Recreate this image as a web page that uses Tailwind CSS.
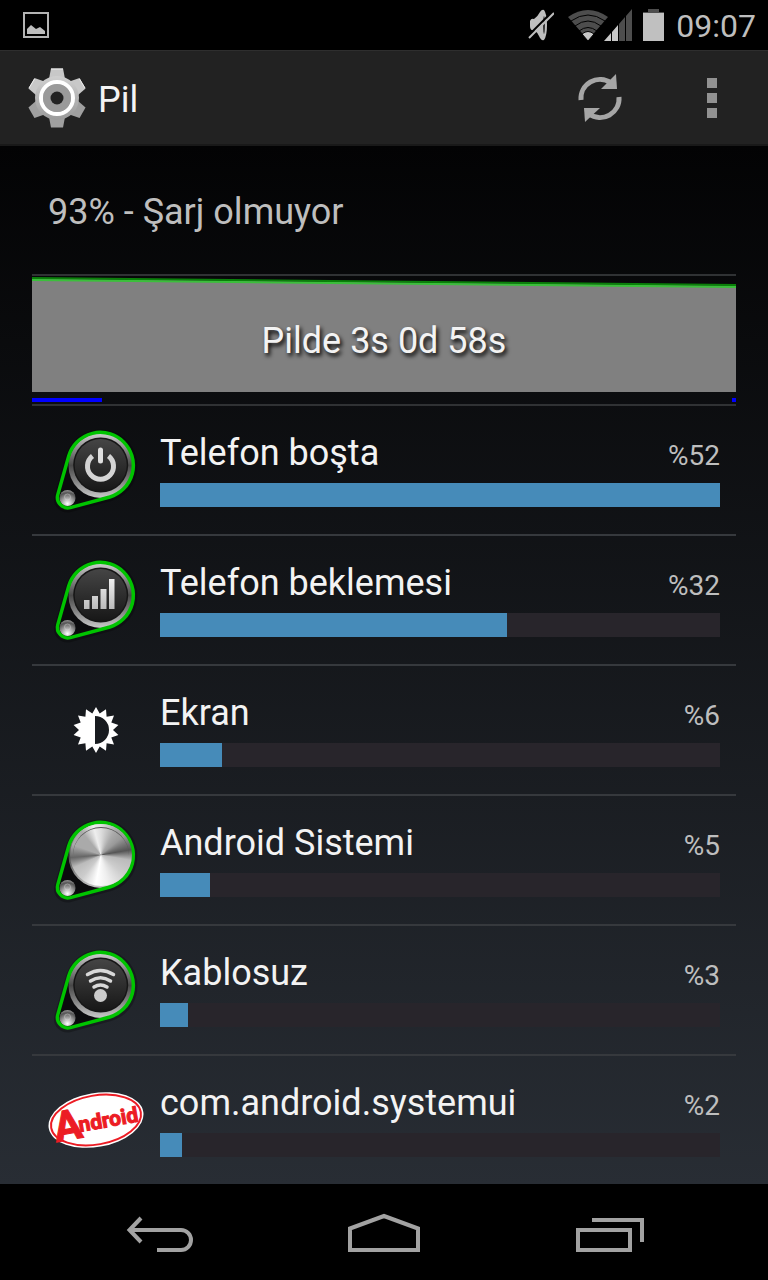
<!DOCTYPE html>
<html lang="tr">
<head>
    <meta charset="UTF-8">
    <meta name="viewport" content="width=device-width, initial-scale=1.0">
    <title>Pil</title>
    <script src="https://cdn.jsdelivr.net/npm/@tailwindcss/browser@4"></script>
</head>
<body class="flex flex-col min-h-screen bg-black font-['Roboto',sans-serif] text-[#f3f3f3]">

    <!-- Shared knob artwork -->
    <svg class="absolute w-0 h-0" aria-hidden="true">
        <defs>
            <linearGradient id="rim" x1="0" y1="0" x2="0" y2="1">
                <stop offset="0" stop-color="#d0d0d0"/>
                <stop offset=".25" stop-color="#8a8a8a"/>
                <stop offset=".5" stop-color="#484848"/>
                <stop offset=".75" stop-color="#858585"/>
                <stop offset="1" stop-color="#cacaca"/>
            </linearGradient>
            <linearGradient id="face" x1="0" y1="0" x2="0" y2="1">
                <stop offset="0" stop-color="#454545"/>
                <stop offset="1" stop-color="#171717"/>
            </linearGradient>
            <linearGradient id="glyph" x1="0" y1="0" x2="0" y2="1">
                <stop offset="0" stop-color="#efefef"/>
                <stop offset="1" stop-color="#bbb"/>
            </linearGradient>
            <radialGradient id="ball" cx=".5" cy=".85" r=".9">
                <stop offset="0" stop-color="#fff"/>
                <stop offset=".45" stop-color="#9a9a9a"/>
                <stop offset=".75" stop-color="#555"/>
                <stop offset="1" stop-color="#aaa"/>
            </radialGradient>
            <linearGradient id="gear" x1="0" y1="0" x2="0" y2="1">
                <stop offset="0" stop-color="#d0d0d0"/>
                <stop offset="1" stop-color="#9a9a9a"/>
            </linearGradient>
        </defs>
        <symbol id="knob" viewBox="0 0 96 96">
            <path d="M20.8 34.7A33.5 33.5 0 1 1 61.8 76.3L22.3 87.1A10.5 10.5 0 0 1 9.4 74.1Z" fill="none" stroke="#000" stroke-opacity=".25" stroke-width="6"/>
            <path d="M20.8 33.7A33.5 33.5 0 1 1 61.8 75L22.3 85.6A10.5 10.5 0 0 1 9.8 72.6Z" fill="#0b0b0d"/>
            <circle cx="53" cy="43.500" r="32.5" fill="url(#rim)"/>
            <circle cx="52.7" cy="43" r="27.5" fill="#161616"/>
            <circle cx="52.7" cy="43" r="26" fill="url(#face)"/>
            <circle cx="19.5" cy="76" r="8" fill="url(#ball)"/>
            <circle cx="19.5" cy="75" r="3" fill="none" stroke="#ddd" stroke-opacity=".4"/>
            <path d="M20.8 33.7A33 33 0 1 1 61.8 75L22.3 85.6A10.5 10.5 0 0 1 9.8 72.6Z" fill="none" stroke="#00c400" stroke-width="3.500"/>
        </symbol>
    </svg>

    <!-- Status bar -->
    <header class="flex items-center justify-between h-[50px] pl-[23px] pr-3 bg-black">
        <svg class="w-[26px] h-[26px]" viewBox="0 0 26 26" fill="none">
            <rect x="1" y="1" width="24" height="24" stroke="#b4b4b4" stroke-width="2"/>
            <path d="M4 22V17L8 13L13 17L17 15L22 19V22Z" fill="#bebebe"/>
        </svg>
        <div class="flex items-center">
            <svg class="w-[26px] h-8 mr-3.5" viewBox="0 0 26 32">
                <path d="M2 12Q3 9 6 10Q10 7 12 3Q14 0 16 1Q19 5 19 16Q19 27 16 31Q13 32 11 27Q9 23 6 21Q2 22 2 17Z" fill="#bebebe"/>
                <ellipse cx="16" cy="16" rx="1" ry="9" fill="#333"/>
                <path d="M0 27L25 2" stroke="#000" stroke-width="2"/>
                <path d="M1 29L26 4" stroke="#bebebe" stroke-width="2"/>
            </svg>
            <svg class="w-10 h-8 -mr-1" viewBox="0 0 40 32">
                <path d="M0 8Q20 -6 40 8L20 31Z" fill="#4d4d4d"/>
                <path d="M3 12Q20 0 37 12M7 17Q20 7 33 17M11 22Q20 15 29 22" fill="none" stroke="#000" stroke-width="1"/>
                <path d="M14 25Q20 20 26 25L20 32Z" fill="#c8c8c8" stroke="#000" stroke-width="1"/>
            </svg>
            <svg class="w-7 h-8 mr-[11px]" viewBox="0 0 28 32">
                <path d="M0 32L7 24V32ZM8 23L14 16V32H8Z" fill="#c8c8c8"/>
                <path d="M15 15L21 8V32H15ZM22 7L28 0V32H22Z" fill="#4d4d4d"/>
            </svg>
            <svg class="w-[21px] h-8 mr-3" viewBox="0 0 21 32">
                <path d="M5 0H16V3H21V6H0V3H5Z" fill="#4d4d4d"/>
                <path d="M0 4H21V32H0Z" fill="#c0c0c0"/>
            </svg>
            <time class="pt-0.5 text-[32px] leading-10 text-[#bebebe]">09:07</time>
        </div>
    </header>

    <!-- Action bar -->
    <div class="flex items-center h-24 pl-7 bg-[#222] border-t border-t-[#2e2e2e] border-b-2 border-b-[#191919]">
        <svg class="w-[58px] h-[60px]" viewBox="-29 -30 58 60">
            <g fill="url(#gear)">
                <path id="tooth" d="M-8 -19L-6 -29.500H6L8 -19Z" fill="#c8c8c8"/>
                <use href="#tooth" transform="rotate(60)"/>
                <use href="#tooth" transform="rotate(300)"/>
                <path id="tooth-low" d="M-8 19L-6 29.500H6L8 19Z" fill="#a0a0a0"/>
                <use href="#tooth-low" transform="rotate(60)"/>
                <use href="#tooth-low" transform="rotate(300)"/>
                <circle r="22"/>
            </g>
            <path d="M-6 -29H6M-22.500 -19L-28 -10M22.500 -19L28 -10" stroke="#eee" stroke-width="1"/>
            <circle r="16" fill="none" stroke="#fff" stroke-width="4"/>
            <circle r="10" fill="none" stroke="#9a9a9a" stroke-width="8"/>
            <circle r="6.500" fill="#222"/>
        </svg>
        <h1 class="flex-1 pl-3 pt-1 text-[36px] leading-[42px]">Pil</h1>
        <button type="button" aria-label="Yenile" class="flex items-center justify-center w-28 h-full">
            <svg class="w-12 h-12" viewBox="0 0 48 48" fill="none" stroke="#a6a6a6" stroke-width="5">
                <path d="M5 26A19 19 0 0 1 35 9"/>
                <path d="M43 23A19 19 0 0 1 13 40"/>
                <path d="M40 0L41 15H25Z" fill="#a6a6a6" stroke="none"/>
                <path d="M9 48L8 34H24Z" fill="#a6a6a6" stroke="none"/>
            </svg>
        </button>
        <button type="button" aria-label="Diğer seçenekler" class="flex flex-col items-center justify-center gap-[5px] w-28 h-full">
            <span class="w-2.5 h-2.5 bg-[#929292]"></span>
            <span class="w-2.5 h-2.5 bg-[#929292]"></span>
            <span class="w-2.5 h-2.5 bg-[#929292]"></span>
        </button>
    </div>

    <main class="flex-1 px-8 bg-linear-to-b/srgb from-[#030304] to-[#282d34]">
        <p class="flex items-center h-32 px-4 pt-1 text-[36px] leading-[42px] text-[#bebebe]">93% - Şarj olmuyor</p>

        <!-- Battery history graph -->
        <div class="relative h-[132px] border-y-2 border-[#303234]">
            <svg class="w-full h-32" viewBox="0 0 704 128" preserveAspectRatio="none">
                <path d="M0 3L704 10V116H0Z" fill="#808080"/>
                <path d="M0 2L704 9" stroke="#0a800a" stroke-width="2"/>
                <path d="M0 4L704 11" stroke="#3bbf3b" stroke-width="2"/>
                <path d="M0 124H70M700 124H704" stroke="#00f" stroke-width="4"/>
            </svg>
            <p class="absolute inset-x-0 top-11 text-center text-[36px] leading-[42px] [text-shadow:2px_3px_4px_#000]">Pilde 3s 0d 58s</p>
        </div>

        <!-- Usage list -->
        <ul class="divide-y-2 divide-[#36393d]">
            <li class="flex items-center gap-4 h-[130px] px-4">
                <svg class="w-24 h-24" viewBox="0 0 96 96">
                    <use href="#knob"/>
                    <path d="M44.500 34A13 13 0 1 0 60.500 34" fill="none" stroke="#d4d4d4" stroke-width="5"/>
                    <path d="M52.500 28V39" stroke="#dedede" stroke-width="5" stroke-linecap="round"/>
                </svg>
                <div class="flex flex-col flex-1 gap-1.5 pb-0.5">
                    <div class="flex items-baseline justify-between leading-[42px]">
                        <h2 class="text-[36px]">Telefon boşta</h2>
                        <span class="text-[28px] text-[#bebebe]">%52</span>
                    </div>
                    <div class="h-6 bg-[#28252b]"><div class="h-full w-full bg-[#468bb9]"></div></div>
                </div>
            </li>
            <li class="flex items-center gap-4 h-[130px] px-4">
                <svg class="w-24 h-24" viewBox="0 0 96 96">
                    <use href="#knob"/>
                    <path d="M36 48h5.500v9H36ZM44 44h6v13h-6ZM52.500 37h6v20h-6ZM61 27h5.500v30H61Z" fill="url(#glyph)"/>
                </svg>
                <div class="flex flex-col flex-1 gap-1.5 pb-0.5">
                    <div class="flex items-baseline justify-between leading-[42px]">
                        <h2 class="text-[36px]">Telefon beklemesi</h2>
                        <span class="text-[28px] text-[#bebebe]">%32</span>
                    </div>
                    <div class="h-6 bg-[#28252b]"><div class="h-full w-[62%] bg-[#468bb9]"></div></div>
                </div>
            </li>
            <li class="flex items-center gap-4 h-[130px] px-4">
                <svg class="w-24 h-24" viewBox="-48 -48 96 96">
                    <path fill="#fff" fill-rule="evenodd" d="M0 -23L3.700 -16.500L10 -20.700L10.600 -13.300L18 -14.400L15.300 -7.400L22.400 -5.100L17 0L22.400 5.100L15.300 7.400L18 14.400L10.600 13.300L10 20.700L3.700 16.500L0 23L-3.700 16.500L-10 20.700L-10.600 13.300L-18 14.400L-15.300 7.400L-22.400 5.100L-17 0L-22.400 -5.100L-15.300 -7.400L-18 -14.400L-10.600 -13.300L-10 -20.700L-3.700 -16.500ZM-1 -14A14 14 0 0 1 -1 14Z"/>
                </svg>
                <div class="flex flex-col flex-1 gap-1.5 pb-0.5">
                    <div class="flex items-baseline justify-between leading-[42px]">
                        <h2 class="text-[36px]">Ekran</h2>
                        <span class="text-[28px] text-[#bebebe]">%6</span>
                    </div>
                    <div class="h-6 bg-[#28252b]"><div class="h-full w-[11%] bg-[#468bb9]"></div></div>
                </div>
            </li>
            <li class="flex items-center gap-4 h-[130px] px-4">
                <div class="relative w-24 h-24">
                    <svg class="w-24 h-24" viewBox="0 0 96 96"><use href="#knob"/></svg>
                    <!-- Brushed metal face -->
                    <span class="absolute left-[22px] top-3 w-[62px] h-[62px] rounded-full bg-[conic-gradient(#ddd,#aaa_30deg,#999_50deg,#555_80deg,#bbb_100deg,#ccc_130deg,#eee_165deg,#fff_190deg,#ccc_220deg,#bbb_245deg,#666_265deg,#aaa_290deg,#aaa_320deg,#eee_345deg,#ddd)]"></span>
                    <span class="absolute left-[25px] top-[15px] w-[56px] h-[56px] rounded-full border-t border-[#555]"></span>
                </div>
                <div class="flex flex-col flex-1 gap-1.5 pb-0.5">
                    <div class="flex items-baseline justify-between leading-[42px]">
                        <h2 class="text-[36px]">Android Sistemi</h2>
                        <span class="text-[28px] text-[#bebebe]">%5</span>
                    </div>
                    <div class="h-6 bg-[#28252b]"><div class="h-full w-[9%] bg-[#468bb9]"></div></div>
                </div>
            </li>
            <li class="flex items-center gap-4 h-[130px] px-4">
                <svg class="w-24 h-24" viewBox="0 0 96 96">
                    <use href="#knob"/>
                    <path d="M39.500 32.500Q52.500 24.500 65.500 32.500M42.500 39Q52.500 32.500 62.500 39M46 45Q52.500 41 59 45" fill="none" stroke="#d8d8d8" stroke-width="3.500" stroke-linecap="round"/>
                    <circle cx="52.500" cy="53.500" r="6.500" fill="#ccc"/>
                </svg>
                <div class="flex flex-col flex-1 gap-1.5 pb-0.5">
                    <div class="flex items-baseline justify-between leading-[42px]">
                        <h2 class="text-[36px]">Kablosuz</h2>
                        <span class="text-[28px] text-[#bebebe]">%3</span>
                    </div>
                    <div class="h-6 bg-[#28252b]"><div class="h-full w-[5%] bg-[#468bb9]"></div></div>
                </div>
            </li>
            <li class="flex items-center gap-4 h-32 px-4">
                <svg class="w-24 h-24" viewBox="0 0 96 96">
                    <g transform="rotate(-10 48 48)">
                        <ellipse cx="48" cy="48" rx="48" ry="27" fill="#fff"/>
                        <ellipse cx="48" cy="48" rx="45.500" ry="24.500" fill="none" stroke="#ec1c24" stroke-width="2"/>
                        <text x="5" y="63" font-family="Roboto, sans-serif" font-weight="700" font-size="42" fill="#ec1c24" stroke="#ec1c24">A<tspan x="30" y="57" font-size="21">ndroid</tspan></text>
                    </g>
                </svg>
                <div class="flex flex-col flex-1 gap-1.5 pb-0.5">
                    <div class="flex items-baseline justify-between leading-[42px]">
                        <h2 class="text-[36px]">com.android.systemui</h2>
                        <span class="text-[28px] text-[#bebebe]">%2</span>
                    </div>
                    <div class="h-6 bg-[#28252b]"><div class="h-full w-[4%] bg-[#468bb9]"></div></div>
                </div>
            </li>
        </ul>
    </main>

    <!-- Navigation bar -->
    <nav class="flex h-24 px-12 bg-black">
        <button type="button" aria-label="Geri" class="flex flex-1 items-center justify-center">
            <svg class="w-[72px] h-12" viewBox="0 0 72 48" fill="none" stroke="#a2a2a2" stroke-width="4">
                <path d="M6 22H57A10 10 0 0 1 57 42H33"/>
                <path d="M17 10L5.500 22L17 34"/>
            </svg>
        </button>
        <button type="button" aria-label="Ana ekran" class="flex flex-1 items-center justify-center">
            <svg class="w-[72px] h-12" viewBox="0 0 72 48" fill="none" stroke="#a2a2a2" stroke-width="4">
                <path d="M2 42V20.500L36 8L70 20.500V42Z"/>
            </svg>
        </button>
        <button type="button" aria-label="Son uygulamalar" class="flex flex-1 items-center justify-center">
            <svg class="w-[72px] h-12" viewBox="0 0 72 48" fill="none" stroke="#a2a2a2" stroke-width="4">
                <path d="M6 22H58V42H6Z"/>
                <path d="M20 12H70V34"/>
            </svg>
        </button>
    </nav>
</body>
</html>
